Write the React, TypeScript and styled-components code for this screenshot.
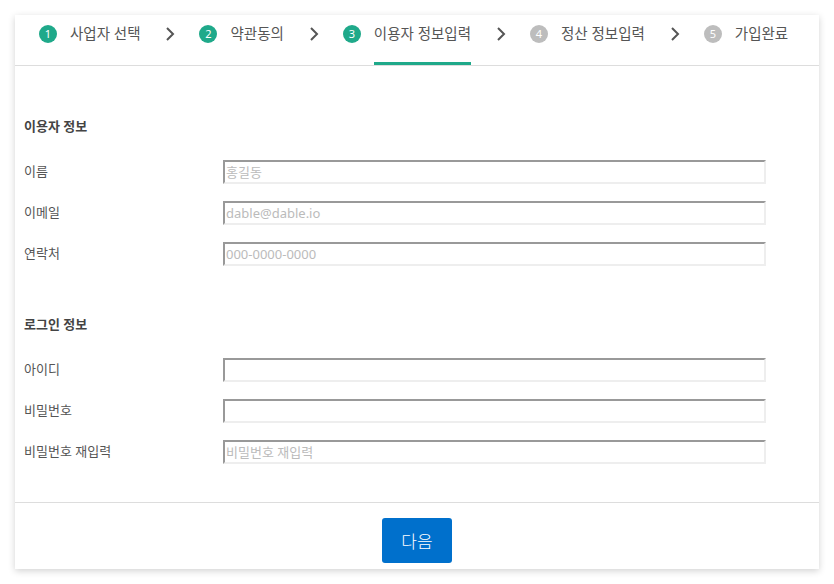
import React from 'react'
import styled, { createGlobalStyle } from 'styled-components'

const green = '#1fa98a'
const grey = '#bdbdbd'
const text = '#555'

const GlobalStyle = createGlobalStyle`
  body {
    margin: 0;
    background: #fff;
    font-family: "Noto Sans", "Noto Sans CJK KR", sans-serif;
    color: ${text};
  }
`

const Page = styled.div`
  padding: 15px;
`

const Card = styled.div`
  width: 804px;
  background: #fff;
  box-shadow: 0 2px 7px rgba(0, 0, 0, 0.18);
`

const Steps = styled.div`
  display: flex;
  align-items: stretch;
  height: 50px;
  padding-left: 24px;
  border-bottom: 1px solid #ddd;
`

const Step = styled.div`
  display: flex;
  align-items: flex-start;
  gap: 13px;
  padding-top: 10px;
`

const StepNumber = styled.span<{ done: boolean }>`
  width: 18px;
  height: 18px;
  border-radius: 50%;
  background: ${({ done }) => (done ? green : grey)};
  color: #fff;
  font-size: 11px;
  line-height: 18px;
  text-align: center;
`

const StepLabel = styled.span<{ active: boolean }>`
  align-self: stretch;
  box-sizing: border-box;
  font-size: 14.5px;
  line-height: 17px;
  color: ${text};
  border-bottom: 3px solid ${({ active }) => (active ? green : 'transparent')};
`

const Chevron = styled.svg`
  width: 10px;
  height: 16px;
  margin: 11px 24px 0 25px;
`

const Form = styled.div`
  padding: 50px 53px 38px 9px;
`

const Section = styled.div`
  & + & {
    margin-top: 48px;
  }
`

const SectionTitle = styled.h3`
  margin: 0 0 24px;
  font-size: 13px;
  line-height: 20px;
  font-weight: 700;
  color: #444;
`

const Rows = styled.div`
  display: flex;
  flex-direction: column;
  gap: 17px;
`

const Row = styled.div`
  display: grid;
  grid-template-columns: 199px 1fr;
  align-items: start;
  height: 24px;
`

const Label = styled.label`
  margin-top: 1px;
  font-size: 13px;
  line-height: 20px;
  color: ${text};
`

const Input = styled.input`
  box-sizing: border-box;
  width: 100%;
  height: 24px;
  margin: 0;
  padding: 0 1px;
  font-family: inherit;
  font-size: 13px;
  color: #333;
  border-style: solid;
  border-width: 2px;
  border-color: #999 #eee #eee #999;
  outline: none;
  &::placeholder {
    color: #bbb;
  }
`

const Footer = styled.div`
  display: flex;
  justify-content: center;
  padding: 15px 0 6px;
  border-top: 1px solid #ddd;
`

const NextButton = styled.button`
  width: 70px;
  height: 45px;
  border: none;
  border-radius: 3px;
  background: #0070cc;
  color: #fff;
  font-family: inherit;
  font-size: 17px;
  font-weight: 300;
`

const steps = ['사업자 선택', '약관동의', '이용자 정보입력', '정산 정보입력', '가입완료']
const current = 2

const sections = [
  {
    title: '이용자 정보',
    fields: [
      { label: '이름', placeholder: '홍길동' },
      { label: '이메일', placeholder: 'dable@dable.io' },
      { label: '연락처', placeholder: '000-0000-0000' },
    ],
  },
  {
    title: '로그인 정보',
    fields: [
      { label: '아이디', placeholder: '' },
      { label: '비밀번호', placeholder: '' },
      { label: '비밀번호 재입력', placeholder: '비밀번호 재입력' },
    ],
  },
]

export default function App() {
  return (
    <Page>
      <GlobalStyle />
      <Card>
        <Steps>
          {steps.map((name, i) => (
            <React.Fragment key={name}>
              {i > 0 && (
                <Chevron viewBox="0 0 10 16">
                  <path d="M2 2 L8 8 L2 14" fill="none" stroke="#555" strokeWidth="2" />
                </Chevron>
              )}
              <Step>
                <StepNumber done={i <= current}>{i + 1}</StepNumber>
                <StepLabel active={i === current}>{name}</StepLabel>
              </Step>
            </React.Fragment>
          ))}
        </Steps>
        <Form>
          {sections.map((section) => (
            <Section key={section.title}>
              <SectionTitle>{section.title}</SectionTitle>
              <Rows>
                {section.fields.map((field) => (
                  <Row key={field.label}>
                    <Label>{field.label}</Label>
                    <Input placeholder={field.placeholder} />
                  </Row>
                ))}
              </Rows>
            </Section>
          ))}
        </Form>
        <Footer>
          <NextButton>다음</NextButton>
        </Footer>
      </Card>
    </Page>
  )
}
